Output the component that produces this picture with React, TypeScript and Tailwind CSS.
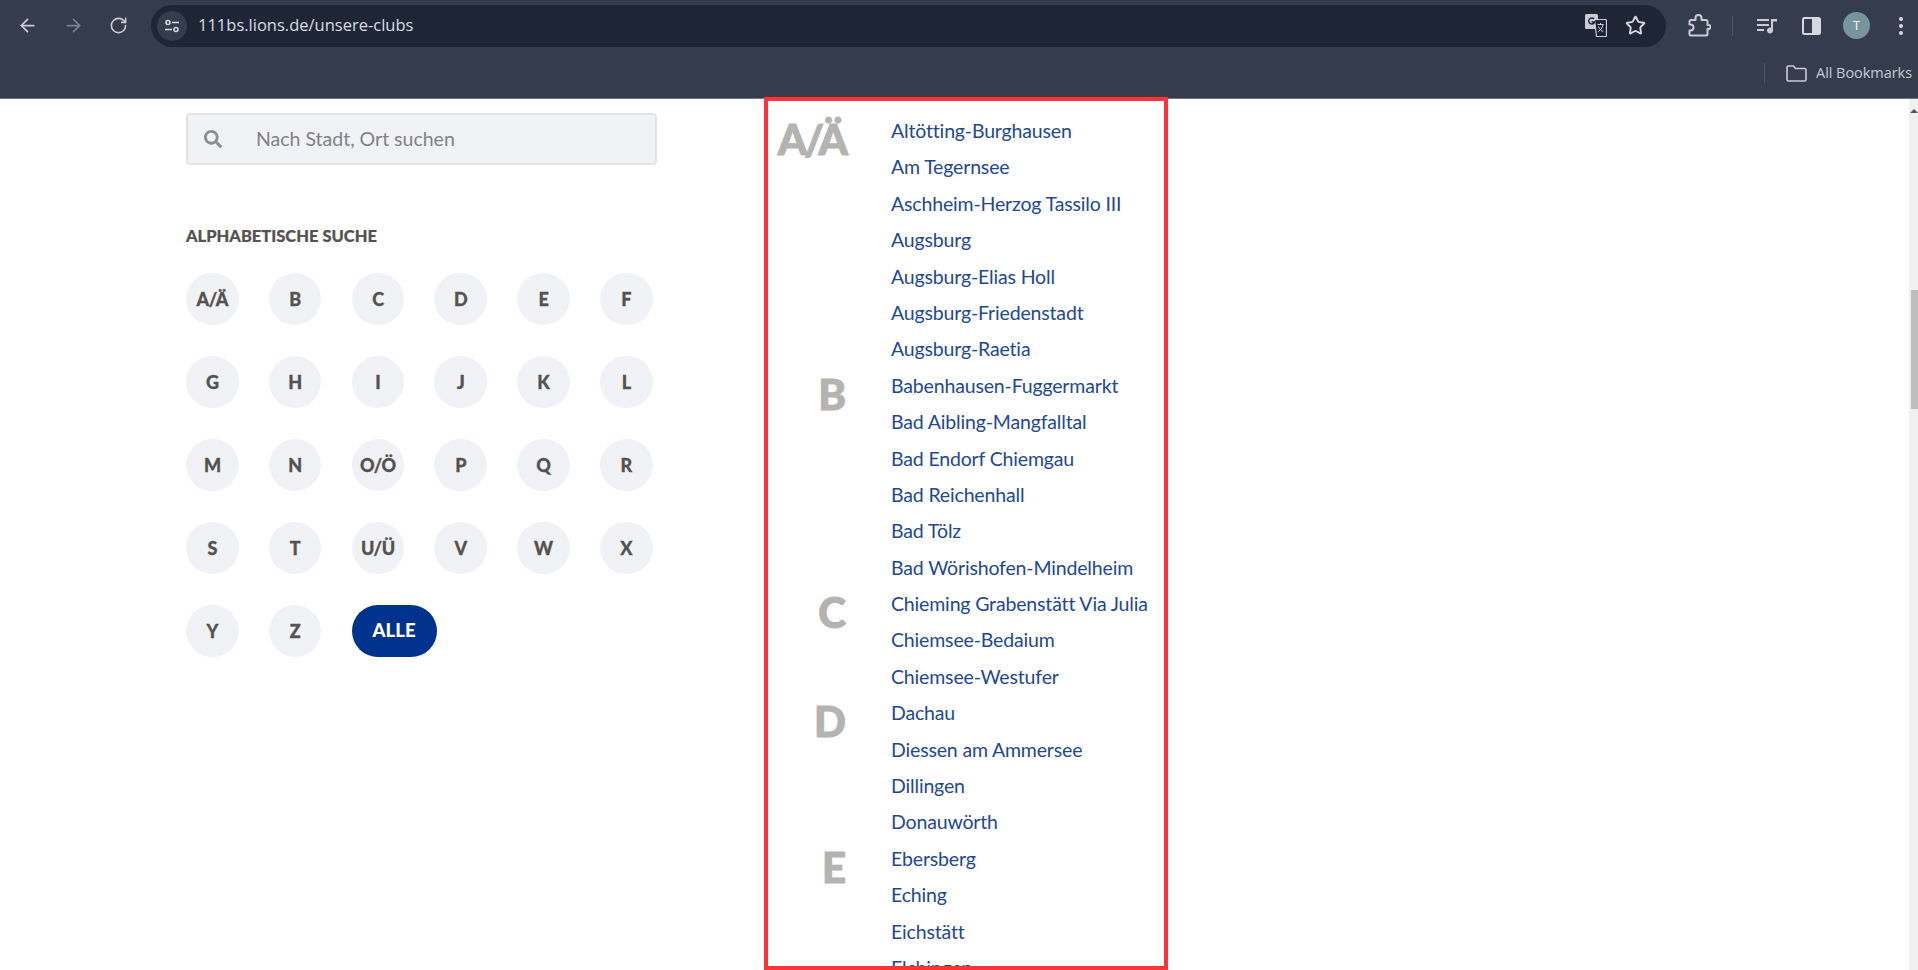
import { ArrowLeft, ArrowRight, RotateCw, Star } from "lucide-react";
import { FaSearch } from "react-icons/fa";

type Group = { letter: string; clubs: string[] };

const letterRows = ["A/Ä", "B", "C", "D", "E", "F", "G", "H", "I", "J", "K", "L", "M", "N", "O/Ö", "P", "Q", "R", "S", "T", "U/Ü", "V", "W", "X", "Y", "Z"];

const groups: Group[] = [
  {
    letter: "A/Ä",
    clubs: ["Altötting-Burghausen", "Am Tegernsee", "Aschheim-Herzog Tassilo III", "Augsburg", "Augsburg-Elias Holl", "Augsburg-Friedenstadt", "Augsburg-Raetia"],
  },
  {
    letter: "B",
    clubs: ["Babenhausen-Fuggermarkt", "Bad Aibling-Mangfalltal", "Bad Endorf Chiemgau", "Bad Reichenhall", "Bad Tölz", "Bad Wörishofen-Mindelheim"],
  },
  { letter: "C", clubs: ["Chieming Grabenstätt Via Julia", "Chiemsee-Bedaium", "Chiemsee-Westufer"] },
  { letter: "D", clubs: ["Dachau", "Diessen am Ammersee", "Dillingen", "Donauwörth"] },
  { letter: "E", clubs: ["Ebersberg", "Eching", "Eichstätt", "Elchingen"] },
];

const Toolbar = () => (
  <div className="h-[51px] flex items-center text-[#c7cad1]">
    <div className="w-[27px]" />
    <ArrowLeft size={21} className="-ml-[10px] text-[#c9ccd3]" />
    <ArrowRight size={21} className="ml-[25px] text-[#7b808c]" />
    <RotateCw size={19} className="ml-[25px] text-[#c9ccd3]" />
    <div className="ml-[23px] w-[1515px] h-[42px] rounded-full bg-[#1e2636] flex items-center pl-[6px]">
      <div className="w-[30px] h-[30px] rounded-full bg-[#343c4e] flex items-center justify-center">
        <svg width="16" height="14" viewBox="0 0 16 14" fill="none" stroke="#d5d8de" strokeWidth="1.6">
          <circle cx="4" cy="3.5" r="2" />
          <path d="M8 3.5h7M1 10.5h7" />
          <circle cx="12" cy="10.5" r="2" />
        </svg>
      </div>
      <span className="ml-[11px] text-[16.5px] text-[#d9dce2] font-['Open_Sans',sans-serif]">111bs.lions.de/unsere-clubs</span>
      <div className="ml-auto flex items-center">
        <svg width="22" height="23" viewBox="0 0 22 23">
          <rect x="0" y="0" width="13" height="15" rx="1.5" fill="#c9ccd3" />
          <path d="M9.5 5.5h11a1 1 0 0 1 1 1v15a1 1 0 0 1-1 1h-9z" fill="#1e2636" stroke="#c9ccd3" strokeWidth="1.2" />
          <path d="M9 5A3 3 0 1 0 9.6 8H6.6" fill="none" stroke="#1e2636" strokeWidth="1.5" />
          <path d="M12.5 10.5h6M15.5 9v1.5M18 10.5c-.6 3.5-2.4 6-5 7M13.5 12.5c.7 2.4 2.4 4.2 4.7 5" fill="none" stroke="#c9ccd3" strokeWidth="1" />
        </svg>
        <Star size={21} strokeWidth={2.2} className="ml-[18px] mr-[20px] text-[#d5d8de]" />
      </div>
    </div>
    <svg className="ml-[22px]" width="23" height="24" viewBox="0 0 23 24" fill="none" stroke="#c9ccd3" strokeWidth="2" strokeLinejoin="round">
      <path d="M3 6h4.500V4a3 3 0 0 1 6 0v2H18a1.500 1.500 0 0 1 1.500 1.500v3.500h1a1.500 1.500 0 0 1 0 4h-1v5a1.500 1.500 0 0 1-1.500 1.500H3a1.500 1.500 0 0 1-1.500-1.500v-3.500h1a3 3 0 0 0 0-6h-1V7.500A1.500 1.500 0 0 1 3 6z" />
    </svg>
    <div className="ml-[21px] w-px h-[20px] bg-[#4d5465]" />
    <svg className="ml-[24px]" width="20" height="16" viewBox="0 0 20 16" fill="#c9ccd3">
      <path d="M0 1h12v2H0zM0 6h12v2H0zM0 11h7v2H0zM14 1h6v2.500h-4V12.500a3 3 0 1 1-2-2.800z" />
    </svg>
    <svg className="ml-[25px]" width="19" height="18" viewBox="0 0 19 18">
      <rect x="1" y="1" width="17" height="16" rx="1.500" fill="none" stroke="#d5d8de" strokeWidth="2" />
      <rect x="10" y="1" width="8" height="16" fill="#d5d8de" />
    </svg>
    <div className="ml-[22px] w-[27px] h-[27px] rounded-full bg-[#78959e] flex items-center justify-center text-[12px] text-white font-['Open_Sans',sans-serif]">T</div>
    <div className="ml-[29px] flex flex-col gap-[3px]">
      <span className="w-[4px] h-[4px] rounded-full bg-[#d5d8de]" />
      <span className="w-[4px] h-[4px] rounded-full bg-[#d5d8de]" />
      <span className="w-[4px] h-[4px] rounded-full bg-[#d5d8de]" />
    </div>
  </div>
);

const BookmarksBar = () => (
  <div className="h-[48px] flex items-center justify-end pr-[6px] pb-[3px] border-b border-[#6d7482]">
    <div className="w-px h-[20px] bg-[#4d5465] mr-[21px]" />
    <svg width="21" height="17" viewBox="0 0 21 17" fill="none" stroke="#c9ccd3" strokeWidth="1.600" strokeLinejoin="round">
      <path d="M1 2.500a1.500 1.500 0 0 1 1.500-1.500h5l2 2.500h9a1.500 1.500 0 0 1 1.500 1.500v9.500a1.500 1.500 0 0 1-1.500 1.500h-16a1.500 1.500 0 0 1-1.500-1.500z" />
    </svg>
    <span className="ml-[9px] text-[14.5px] tracking-[-0.05px] text-[#c7cad1] font-['Open_Sans',sans-serif]">All Bookmarks</span>
  </div>
);

const LetterFilter = () => (
  <div className="w-[471px] pt-[14px] shrink-0">
    <div className="h-[52px] rounded-[4px] border-2 border-[#e2e3e7] bg-[#f1f2f6] flex items-center pl-[16px]">
      <FaSearch size={18} className="text-[#8f8f8f]" />
      <span className="ml-[34px] text-[19.5px] text-[#808187]">Nach Stadt, Ort suchen</span>
    </div>
    <h2 className="mt-[59px] text-[16.5px] leading-[24px] font-black [-webkit-text-stroke:0.2px] text-[#55524f]">ALPHABETISCHE SUCHE</h2>
    <div className="mt-[25px] flex flex-wrap gap-x-[30.200px] gap-y-[31px]">
      {letterRows.map((letter) => (
        <div key={letter} className="w-[52.600px] h-[52px] rounded-full bg-[#f1f2f6] flex items-center justify-center text-[18px] font-black tracking-[-0.4px] [-webkit-text-stroke:0.3px] text-[#55524f]">
          {letter}
        </div>
      ))}
      <div className="w-[85px] h-[52px] rounded-full bg-[#00338d] flex items-center justify-center text-[18.5px] font-black text-white">ALLE</div>
    </div>
  </div>
);

const ClubList = () => (
  <div className="ml-[107px] w-[404px] h-[873px] -mt-[2px] border-4 border-[#ff3333] overflow-hidden pt-[12px] shrink-0 relative">
    {groups.map((group) => (
      <div key={group.letter} className="flex">
        <div className="w-[77px] shrink-0 text-right text-[42px] leading-[50px] font-black tracking-[-1px] [-webkit-text-stroke:1px] whitespace-nowrap text-[#b5b3b0] pt-[1px]">
          {group.letter === "A/Ä" ? <span className="tracking-[-3px]">{group.letter}</span> : group.letter}
        </div>
        <ul className="ml-[46px]">
          {group.clubs.map((club) => (
            <li key={club} className="h-[36.400px] leading-[36.400px] text-[19.500px] tracking-[-0.16px] whitespace-nowrap text-[#23488f]">
              {club}
            </li>
          ))}
        </ul>
      </div>
    ))}
  </div>
);

export default function App() {
  return (
    <div className="h-[970px] w-[1918px] overflow-hidden bg-white font-['Lato',sans-serif]">
      <div className="bg-[#343c4e]">
        <Toolbar />
        <BookmarksBar />
      </div>
      <div className="flex pl-[186px]">
        <LetterFilter />
        <ClubList />
        <div className="ml-auto w-[9px] h-[871px] bg-[#f0f0f0] flex flex-col items-end">
          <div className="mt-[10px] w-0 h-0 border-x-[4px] border-x-transparent border-b-[4px] border-b-[#555]" />
          <div className="mt-[177px] w-[7px] h-[119px] bg-[#bdbdbd]" />
        </div>
      </div>
    </div>
  );
}
